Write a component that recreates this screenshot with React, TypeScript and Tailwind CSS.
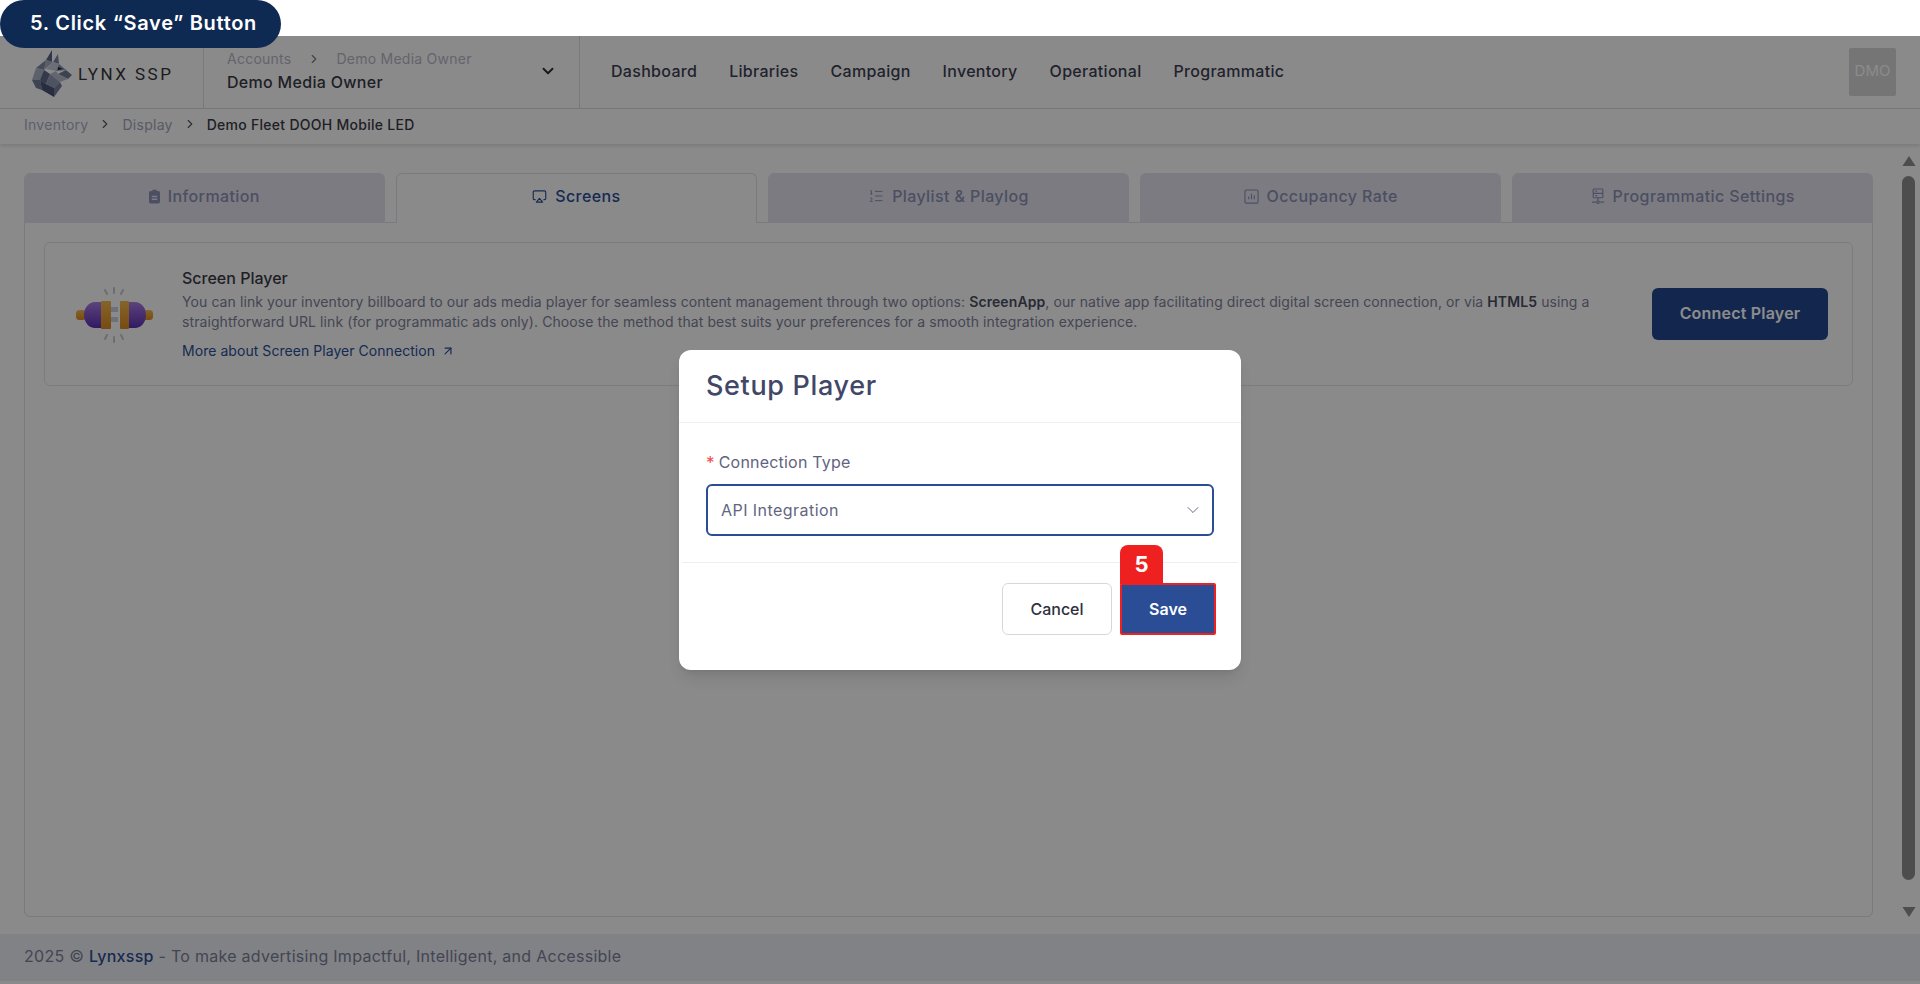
import { Airplay, ArrowUpRight, ChevronDown, ChevronRight, ListOrdered } from "lucide-react";

const font = "font-['Inter','Liberation_Sans',sans-serif]";

function ClipboardIcon() {
  return (
    <svg viewBox="0 0 16 20" className="w-[11px] h-[15px]" fill="currentColor">
      <path d="M5 0h6v2h2.5A2.5 2.5 0 0 1 16 4.5v13a2.5 2.5 0 0 1-2.5 2.5h-11A2.5 2.5 0 0 1 0 17.5v-13A2.5 2.5 0 0 1 2.5 2H5V0Zm-1 9v2h8V9H4Zm0 4v2h8v-2H4Z" />
    </svg>
  );
}

function ChartBoxIcon() {
  return (
    <svg viewBox="0 0 16 16" className="w-[15px] h-[15px]" fill="none" stroke="currentColor" strokeWidth="1.2">
      <rect x="1" y="1" width="14" height="14" rx="1.5" />
      <path d="M5 11V8M8 11V5M11 11V7" />
    </svg>
  );
}

function ServerIcon() {
  return (
    <svg viewBox="0 0 16 18" className="w-[14px] h-[16px]" fill="none" stroke="currentColor" strokeWidth="1.3">
      <rect x="2.5" y="1" width="11" height="10" rx="1" />
      <path d="M2.5 6h11M5 3.5h2M5 8.500h2M8 11v3M1 16h4.500M10.500 16H15" />
      <circle cx="8" cy="16" r="1.500" />
    </svg>
  );
}

function LynxLogo() {
  const faces: [string, string][] = [
    ["14,10 20,0 20,12", "#5c6784"],
    ["21,12 26,4 27,14", "#7b86a1"],
    ["14,10 21,12 12,20", "#a3acc0"],
    ["21,12 27,14 24,21 14,19", "#c5cad6"],
    ["27,14 34,20 24,21", "#8893ab"],
    ["34,20 40,25 36,29 26,24", "#6d7892"],
    ["24,21 26,24 36,29 28,32 18,24", "#b4bbcb"],
    ["14,10 12,20 4,18", "#7d88a3"],
    ["4,18 12,20 8,30 0,30", "#a9b1c4"],
    ["12,20 18,24 14,34 8,30", "#5f6a88"],
    ["18,24 28,32 22,38 14,34", "#8d97af"],
    ["0,30 8,30 10,40 4,38", "#6f7a96"],
    ["8,30 14,34 22,38 22,47 10,40", "#4a5474"],
    ["22,38 28,32 30,36 22,47", "#747f9a"],
  ];
  return (
    <svg viewBox="0 0 40 47" className="w-[40px] h-[47px] -mt-[4px]">
      {faces.map(([points, fill]) => (
        <polygon key={points} points={points} fill={fill} />
      ))}
      <polygon points="26,17 31,19 26,20" fill="#1e2a4a" />
    </svg>
  );
}

function PlugIcon() {
  return (
    <svg viewBox="0 0 77 56" className="w-[77px] h-[56px] shrink-0 mt-[2px]">
      <defs>
        <linearGradient id="purple" x1="0" y1="0" x2="0" y2="1">
          <stop offset="0" stopColor="#a77be0" />
          <stop offset="1" stopColor="#5b2fb5" />
        </linearGradient>
        <linearGradient id="orange" x1="0" y1="0" x2="0" y2="1">
          <stop offset="0" stopColor="#f2b64e" />
          <stop offset="1" stopColor="#d98a1f" />
        </linearGradient>
      </defs>
      <rect x="0" y="23" width="10" height="10" rx="3.500" fill="url(#orange)" />
      <rect x="67" y="23" width="10" height="10" rx="3.500" fill="url(#orange)" />
      <path d="M26 15H19a11 13 0 0 0-11 13a11 13 0 0 0 11 13h7Z" fill="url(#purple)" />
      <path d="M52 15h7a11 13 0 0 1 11 13a11 13 0 0 1-11 13h-7Z" fill="url(#purple)" />
      <rect x="25" y="14" width="10" height="28" rx="1" fill="url(#orange)" />
      <rect x="44" y="14" width="9" height="28" rx="1" fill="url(#orange)" />
      <rect x="35" y="20" width="7" height="5" fill="#c9cde0" />
      <rect x="35" y="30" width="7" height="5" fill="#c9cde0" />
      <g stroke="#c4c6cf" strokeWidth="2" strokeLinecap="round">
        <path d="M38 1v5M29 3l2 4M47 3l-2 4M38 50v5M29 52l2-4M47 52l-2-4" />
      </g>
    </svg>
  );
}

const tabs = [
  { label: "Information", icon: <ClipboardIcon /> },
  { label: "Screens", icon: <Airplay className="w-[15px] h-[15px]" strokeWidth={1.8} />, active: true },
  { label: "Playlist & Playlog", icon: <ListOrdered className="w-[16px] h-[16px]" strokeWidth={1.5} /> },
  { label: "Occupancy Rate", icon: <ChartBoxIcon /> },
  { label: "Programmatic Settings", icon: <ServerIcon /> },
];

const menu = ["Dashboard", "Libraries", "Campaign", "Inventory", "Operational", "Programmatic"];

export default function App() {
  return (
    <div className={`${font} relative w-[1920px] h-[984px] flex flex-col overflow-hidden bg-white`}>
      <div className="h-9 shrink-0 bg-white" />

      <div className="relative flex-1 flex flex-col min-h-0 bg-[#fcfcfc]">
        <header className="h-[73px] shrink-0 flex border-b border-[#dcdce2]">
          <div className="w-[204px] shrink-0 flex items-center pl-[32px] gap-[6px] pt-[6px] border-r border-[#dcdce2]">
            <LynxLogo />
            <span className="font-['Roboto',sans-serif] text-[17px] tracking-[2.500px] text-[#333338] whitespace-nowrap">LYNX SSP</span>
          </div>
          <div className="w-[376px] shrink-0 flex items-center justify-between pl-[23px] pr-[22px] pb-[2px] border-r border-[#dcdce2]">
            <div className="flex flex-col">
              <div className="flex items-center text-[14px] leading-5 tracking-[0.25px] text-[#b4b6c6]">
                <span>Accounts</span>
                <ChevronRight className="w-[14px] h-[14px] mx-[15.500px] text-[#77798a]" />
                <span>Demo Media Owner</span>
              </div>
              <span className="mt-[1px] text-[16px] leading-6 font-medium tracking-[0.3px] text-[#3a3a45]">Demo Media Owner</span>
            </div>
            <ChevronDown className="w-[18px] h-[18px] text-[#2d2d38]" strokeWidth={2.500} />
          </div>
          <nav className="flex-1 flex items-center pl-[31px] pb-[2px] gap-[32px] text-[16px] font-medium tracking-[0.3px] text-[#3d3f52]">
            {menu.map((item) => (
              <span key={item}>{item}</span>
            ))}
          </nav>
          <div className="flex items-center pr-[24px]">
            <div className="w-[47px] h-[48px] pb-[2px] rounded-[2px] bg-[#d6d6d8] flex items-center justify-center text-[15px] text-[#fcfcfc]">DMO</div>
          </div>
        </header>

        <div className="relative z-10 h-[35px] shrink-0 flex items-center pl-[24px] pb-[5px] text-[14px] tracking-[0.27px] shadow-[0_2px_4px_rgba(0,0,0,0.12)] bg-[#fcfcfc]">
          <span className="text-[#a9adc6]">Inventory</span>
          <ChevronRight className="w-[14px] h-[14px] mx-[10px] text-[#55586a]" />
          <span className="text-[#a0a3b8]">Display</span>
          <ChevronRight className="w-[14px] h-[14px] mx-[10px] text-[#55586a]" />
          <span className="font-medium text-[#3a3a45]">Demo Fleet DOOH Mobile LED</span>
        </div>

        <main className="flex-1 min-h-0 flex pl-[24px] pt-[29px] pb-[17px]">
          <div className="w-[1849px] flex flex-col">
            <div className="relative z-10 grid grid-cols-5 gap-[11.500px] -mb-px">
              {tabs.map((tab) => (
                <div
                  key={tab.label}
                  className={`h-[50px] flex items-center justify-center gap-[8px] rounded-t-[6px] text-[16px] font-medium tracking-[0.4px] ${
                    tab.active
                      ? "pb-[5px] bg-[#fcfcfc] border border-b-0 border-[#dcdce6] text-[#2a4d96]"
                      : "pb-[4px] bg-[#e1e1ec] text-[#8a8fb2]"
                  }`}
                >
                  {tab.icon}
                  <span>{tab.label}</span>
                </div>
              ))}
            </div>
            <div className="flex-1 border border-[#dcdce6] rounded-b-[6px] px-[19px] pt-[19px]">
              <div className="h-[144px] flex items-center border border-[#e2e2ea] rounded-[6px] pl-[31px] pr-[24px]">
                <PlugIcon />
                <div className="flex-1 ml-[29px] flex flex-col">
                  <h3 className="-mt-[1px] text-[16px] leading-6 font-medium text-[#3a3a45]">Screen Player</h3>
                  <p className="mt-[2px] text-[14px] leading-[20px] tracking-[0.09px] text-[#7d8098] whitespace-nowrap">
                    You can link your inventory billboard to our ads media player for seamless content management through two options: <b className="font-semibold text-[#4a4d62]">ScreenApp</b>, our native app facilitating direct digital screen connection, or via <b className="font-semibold text-[#4a4d62]">HTML5</b> using a
                    <br />
                    straightforward URL link (for programmatic ads only). Choose the method that best suits your preferences for a smooth integration experience.
                  </p>
                  <a className="mt-[9px] flex items-center gap-[6px] text-[14px] leading-5 tracking-[0.05px] text-[#2a4d96]">
                    More about Screen Player Connection
                    <ArrowUpRight className="w-[14px] h-[14px]" />
                  </a>
                </div>
                <button className="w-[176px] h-[52px] pb-[2px] rounded-[6px] bg-[#24478f] text-[16px] font-semibold tracking-[0.2px] text-white shrink-0">Connect Player</button>
              </div>
            </div>
          </div>

          <div className="ml-[29px] w-[13px] flex flex-col items-center -mt-[17px]">
            <svg viewBox="0 0 13 10" className="w-[14px] h-[10px] shrink-0" fill="#8c8c8c">
              <path d="M6.500 0 13 10H0Z" />
            </svg>
            <div className="mt-[10px] flex-1 w-[13px] rounded-full bg-[#8c8c8c]" />
            <svg viewBox="0 0 13 10" className="mt-[27px] w-[14px] h-[10px] shrink-0" fill="#8c8c8c">
              <path d="M6.500 10 13 0H0Z" />
            </svg>
          </div>
        </main>

        <footer className="h-[47px] shrink-0 mb-[3px] pb-[4px] flex items-center pl-[24px] bg-[#ecedf2] text-[16px] tracking-[0.28px] text-[#7a7e9a]">
          <span>2025 © <span className="font-medium text-[#2a4d96]">Lynxssp</span> - To make advertising Impactful, Intelligent, and Accessible</span>
        </footer>

        <div className="absolute inset-0 z-20 flex items-center justify-center bg-black/45">
          <div className="w-[562px] h-[320px] rounded-[12px] bg-white flex flex-col shadow-lg">
            <div className="h-[73px] shrink-0 flex items-center pt-[1px] px-[27px] border-b border-[#eeeef2]">
              <h2 className="text-[27px] font-medium tracking-[0.65px] text-[#424767]">Setup Player</h2>
            </div>
            <div className="h-[140px] shrink-0 mx-[3px] px-[24px] pt-[28px] border-b border-[#eeeef2]">
              <label className="flex items-center h-[22px] text-[16px] tracking-[0.2px] text-[#5f6380]">
                <span className="mr-[4px] mt-[3px] text-[#f5484a] text-[17px]">*</span>
                Connection Type
              </label>
              <div className="mt-[11px] h-[52px] flex items-center justify-between pl-[13px] pr-[9px] border-2 border-[#2a4d96] rounded-[6px] text-[16px] tracking-[0.45px] text-[#62667f]">
                <span>API Integration</span>
                <ChevronDown className="w-[20px] h-[20px] text-[#4a4e68]" strokeWidth={1} />
              </div>
            </div>
            <div className="flex justify-end gap-[8px] pt-[20px] pr-[25px]">
              <button className="w-[110px] h-[52px] rounded-[6px] border border-[#d8d8dc] text-[16px] font-medium text-[#2f3040]">Cancel</button>
              <div className="relative">
                <span className="absolute -top-[38px] left-0 w-[43px] h-[39px] rounded-t-[8px] bg-[#ee2020] flex items-center justify-center text-[22px] font-bold text-white">5</span>
                <button className="w-[96px] h-[52px] rounded-[2px] border-2 border-[#ee2020] bg-[#2a4d96] text-[16px] font-semibold text-white">Save</button>
              </div>
            </div>
          </div>
        </div>
      </div>

      <div className="absolute z-30 left-0 top-0 w-[281px] h-[48px] pb-[2px] rounded-[24px] bg-[#0f2a52] flex items-center pl-[30px] text-[20px] font-semibold tracking-[0.7px] text-white whitespace-nowrap">
        5. Click “Save” Button
      </div>
    </div>
  );
}
